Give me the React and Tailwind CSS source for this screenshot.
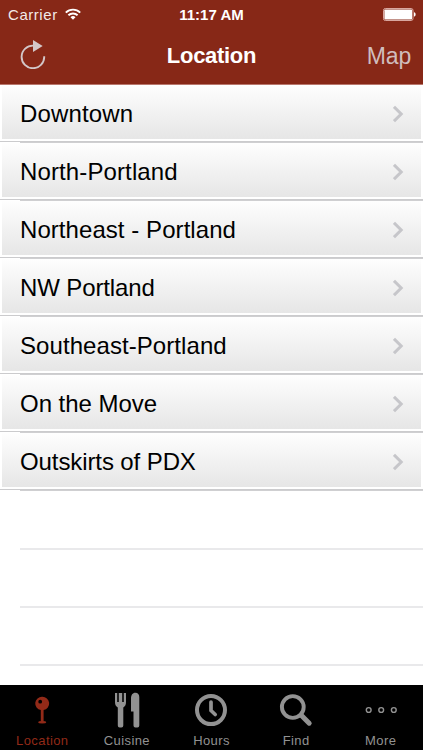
const locations = [
    { name: 'Downtown', tracking: 'tracking-[0.15px]' },
    { name: 'North-Portland', tracking: 'tracking-[0.12px]' },
    { name: 'Northeast - Portland', tracking: 'tracking-[0.06px]' },
    { name: 'NW Portland', tracking: 'tracking-[-0.12px]' },
    { name: 'Southeast-Portland', tracking: 'tracking-[0.07px]' },
    { name: 'On the Move', tracking: 'tracking-[-0.02px]' },
    { name: 'Outskirts of PDX', tracking: 'tracking-[-0.1px]' },
];

function PinIcon() {
    return (
        <svg viewBox="0 0 40 40" className="h-10 w-10" fill="currentColor">
            <path fillRule="evenodd" d="M20.2 6.8a6.7 6.7 0 0 1 1.4 13.3v12h-2.8v-12A6.7 6.7 0 0 1 20.2 6.8ZM18.2 9.8a1.9 1.9 0 1 0 0 3.8 1.9 1.9 0 0 0 0-3.8Z" />
            <ellipse cx="20.2" cy="32.2" rx="4" ry="1.2" />
        </svg>
    );
}

function CutleryIcon() {
    return (
        <svg viewBox="0 0 40 40" className="h-10 w-10" fill="currentColor">
            <path d="M8 3h2.2v9h1.6V3h3.4v9h1.6V3H19v9c0 2.8-1 4.5-2.7 5.500v18a1.9 1.9 0 0 1-1.9 1.9h-1.7a1.9 1.9 0 0 1-1.9-1.9v-18C9 16.5 8 14.8 8 12Z" />
            <path d="M24 9c0-4 1.5-6.2 4.4-6.2 2.5 0 3.9 1.6 3.9 4.2v28.5a1.9 1.9 0 0 1-1.9 1.9h-2a1.9 1.9 0 0 1-1.9-1.9V21.5H24Z" />
        </svg>
    );
}

function ClockIcon() {
    return (
        <svg viewBox="0 0 40 40" className="h-10 w-10" fill="none" stroke="currentColor">
            <circle cx="20" cy="20.1" r="14" strokeWidth="4" />
            <path d="M20 12v8.5l4.2 4" strokeWidth="3.7" strokeLinecap="round" />
        </svg>
    );
}

function SearchIcon() {
    return (
        <svg viewBox="0 0 40 40" className="h-10 w-10" fill="none" stroke="currentColor">
            <circle cx="16.8" cy="17" r="10.9" strokeWidth="3.9" />
            <path d="M25.5 25.5l7.7 7.7" strokeWidth="5" strokeLinecap="round" />
        </svg>
    );
}

function MoreIcon() {
    return (
        <svg viewBox="0 0 40 40" className="h-10 w-10" fill="none" stroke="currentColor" strokeWidth="1.4">
            <circle cx="7.7" cy="20" r="2.4" />
            <circle cx="20.2" cy="20" r="2.4" />
            <circle cx="32.8" cy="20" r="2.4" />
        </svg>
    );
}

function StatusBar() {
    return (
        <div className="grid h-[28px] grid-cols-3 items-center px-2 text-white">
            <div className="flex items-center gap-[7px]">
                <span className="text-[15px] leading-none tracking-[0.55px] opacity-90">Carrier</span>
                <svg viewBox="0 0 16 12" className="h-3 w-4" fill="none" stroke="currentColor" strokeWidth="1.9">
                    <path d="M.8 4.6a10.3 10.3 0 0 1 14.4 0" />
                    <path d="M3.4 7.3a6.6 6.6 0 0 1 9.2 0" />
                    <path d="M8 11.7 5.5 9.2a3.6 3.6 0 0 1 5 0Z" fill="currentColor" stroke="none" />
                </svg>
            </div>
            <span className="text-center text-[15px] leading-none font-bold whitespace-nowrap">11:17 AM</span>
            <svg viewBox="0 0 33 13" className="mr-[-1px] h-[13px] w-[33px] justify-self-end">
                <rect x=".5" y=".5" width="29.5" height="12" rx="1.8" fill="none" stroke="#d9a79f" />
                <rect x="1.4" y="1.4" width="27.7" height="10.2" rx=".8" fill="#fff" />
                <path d="M31 4.3c2.2.6 2.2 3.8 0 4.4Z" fill="#fff" />
            </svg>
        </div>
    );
}

function NavBar() {
    return (
        <div className="grid h-[56px] grid-cols-3 items-center pr-3 pl-[20px]">
            <svg viewBox="0 0 26 30" className="mb-[4px] h-[30px] w-[26px]">
                <path d="M13.5 6.6A11.3 11.3 0 1 0 24.2 17.3" fill="none" stroke="#d3c7c8" strokeWidth="1.9" />
                <path d="M13 .9v12l9.7-6Z" fill="#d3c7c8" />
            </svg>
            <h1 className="ml-[-8px] text-center text-[22px] leading-none font-bold tracking-[-0.3px] text-white">Location</h1>
            <span className="justify-self-end text-[23px] leading-none tracking-[-0.2px] text-[#d0bdbd]">Map</span>
        </div>
    );
}

function LocationRow({ name, tracking }) {
    return (
        <li className="h-[58px] bg-white">
            <div className="h-[54px] px-[2px]">
                <div className="flex h-full items-center justify-between bg-linear-to-b from-[#fefefe] to-[#e6e6e6] pr-[16px] pl-[18px]">
                    <span className={`pt-[3px] text-[24px] leading-none text-black ${tracking}`}>{name}</span>
                    <svg viewBox="0 0 12 18" className="mt-1 h-[18px] w-3" fill="none" stroke="#c6c6ca" strokeWidth="3">
                        <path d="M1 1.8 8.2 9 1 16.2" />
                    </svg>
                </div>
            </div>
            <div className="mt-[2px] h-px bg-[#cbcbcd]" />
            <div className="ml-5 h-px bg-[#cfcfd1]" />
        </li>
    );
}

function EmptyRow() {
    return <div className="ml-5 h-[58px] border-b-2 border-[#e9e9eb]" />;
}

function Tab({ label, active, children }) {
    return (
        <div className={`flex flex-1 flex-col items-center pt-[5px] ${active ? 'text-[#922a18]' : 'text-[#929292]'}`}>
            {children}
            <span className="mt-[3px] text-[13px] leading-[15px] tracking-[0.4px]">{label}</span>
        </div>
    );
}

export default function App() {
    return (
        <div className="flex h-[750px] w-[423px] flex-col overflow-hidden bg-white font-['Liberation_Sans',Arial,sans-serif]">
            <header className="h-[85px] shrink-0 border-b border-[#b9776d] bg-[#872817]">
                <StatusBar />
                <NavBar />
            </header>

            <main className="flex-1 overflow-hidden">
                <ul>
                    {locations.map((l) => (
                        <LocationRow key={l.name} name={l.name} tracking={l.tracking} />
                    ))}
                </ul>
                <div className="pt-px">
                    <EmptyRow />
                    <EmptyRow />
                    <EmptyRow />
                </div>
            </main>

            <nav className="flex h-[65px] shrink-0 bg-black">
                <Tab label="Location" active><PinIcon /></Tab>
                <Tab label="Cuisine"><CutleryIcon /></Tab>
                <Tab label="Hours"><ClockIcon /></Tab>
                <Tab label="Find"><SearchIcon /></Tab>
                <Tab label="More"><MoreIcon /></Tab>
            </nav>
        </div>
    );
}
